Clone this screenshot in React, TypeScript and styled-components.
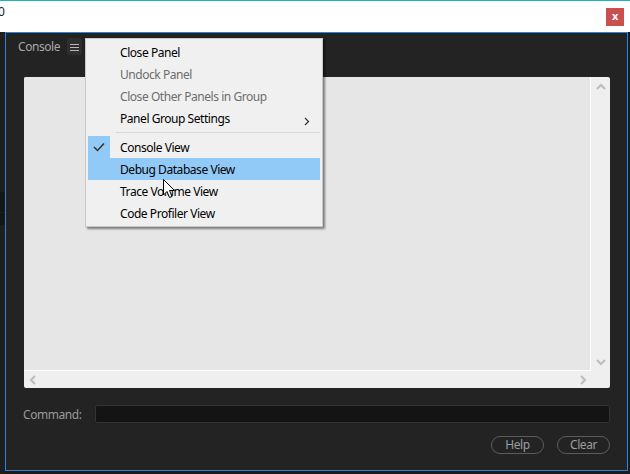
import styled, { createGlobalStyle } from "styled-components";

const GlobalStyle = createGlobalStyle`
  html, body {
    margin: 0;
    padding: 0;
    background: #1c1c1c;
    overflow: hidden;
  }
  * {
    box-sizing: border-box;
  }
`;

const Screen = styled.div`
  position: relative;
  width: 630px;
  height: 474px;
  display: flex;
  flex-direction: column;
  font-family: "Noto Sans", "Open Sans", sans-serif;
  font-size: 12px;
  letter-spacing: -0.45px;
  background: #1b1b1b;
`;

const TitleBar = styled.div`
  height: 32px;
  background: #fff;
  border-top: 1px solid #1ab4c0;
  display: flex;
  align-items: flex-start;
  justify-content: space-between;
  padding: 7px 6px 0 0;
`;

const Stray = styled.span`
  margin-top: -5px;
  margin-left: -2px;
  font-size: 12px;
  color: #222;
`;

const CloseButton = styled.div`
  width: 18px;
  height: 18px;
  background: #c9504f;
  color: #fff;
  font-weight: bold;
  font-size: 11px;
  line-height: 16px;
  text-align: center;
`;

const Workspace = styled.div`
  flex: 1;
  display: flex;
`;

const SideStrip = styled.div`
  width: 5px;
  background: #1e1e1e;
  display: flex;
  flex-direction: column;
  padding-top: 160px;
  gap: 1px;
`;

const SideBlock = styled.div<{ $h: number }>`
  height: ${(p) => p.$h}px;
  background: #151515;
`;

const Panel = styled.div`
  width: 623px;
  height: 439px;
  border: 1px solid #2a84e0;
  background: #232323;
  display: flex;
  flex-direction: column;
`;

const PanelHeader = styled.div`
  height: 44px;
  display: flex;
  align-items: flex-start;
  padding: 5px 0 0 12px;
`;

const TabLabel = styled.span`
  width: 49px;
  color: #a9a9a9;
  line-height: 17px;
`;

const MenuButton = styled.div`
  width: 15px;
  height: 17px;
  background: #2e2e2e;
  border-radius: 2px;
  display: flex;
  align-items: center;
  justify-content: center;
`;

const Output = styled.div`
  margin: 0 17px 0 18px;
  height: 311px;
  background: #efefef;
  border-radius: 2px;
  display: grid;
  grid-template-columns: 1fr 19px;
  grid-template-rows: 1fr 17px;
`;

const OutputText = styled.div`
  background: #e6e6e6;
  border-right: 1px solid #fff;
  border-bottom: 1px solid #fff;
  border-top-left-radius: 2px;
`;

const VScroll = styled.div`
  grid-row: 1 / 3;
  grid-column: 2;
  display: flex;
  flex-direction: column;
  justify-content: space-between;
  align-items: center;
  padding: 6px 0 22px;
`;

const HScroll = styled.div`
  display: flex;
  justify-content: space-between;
  align-items: center;
  padding: 0 4px 0 5px;
`;

const CommandRow = styled.div`
  margin: 17px 17px 0 17px;
  display: flex;
  align-items: center;
`;

const CommandLabel = styled.span`
  color: #9a9a9a;
  width: 72px;
`;

const CommandInput = styled.div`
  flex: 1;
  height: 18px;
  background: #141414;
  border: 1px solid #333;
  border-radius: 2px;
`;

const ButtonRow = styled.div`
  margin: 13px 17px 0 0;
  display: flex;
  justify-content: flex-end;
  gap: 13px;
`;

const PillButton = styled.div`
  width: 53px;
  height: 18px;
  border: 1px solid #5c5c5c;
  border-radius: 9px;
  color: #9d9d9d;
  line-height: 15px;
  text-align: center;
`;

const Menu = styled.div`
  position: absolute;
  left: 85px;
  top: 38px;
  width: 238px;
  height: 189px;
  background: #f0f0f0;
  border: 1px solid #c8c8c8;
  box-shadow: 2px 2px 2px rgba(0, 0, 0, 0.45);
  padding: 2px 2px;
  display: flex;
  flex-direction: column;
`;

const Item = styled.div<{ $disabled?: boolean; $hover?: boolean }>`
  position: relative;
  height: 22px;
  display: flex;
  align-items: center;
  padding-left: 32px;
  color: ${(p) => (p.$disabled ? "#6d6d6d" : "#000")};
  background: ${(p) => (p.$hover ? "#91c9f7" : "transparent")};
  white-space: nowrap;
`;

const CheckBox = styled.div`
  position: absolute;
  left: 0;
  top: 0;
  width: 22px;
  height: 22px;
  background: #91c9f7;
  display: flex;
  align-items: center;
  justify-content: center;
`;

const SubArrow = styled.div`
  position: absolute;
  right: 10px;
  top: 6px;
`;

const Separator = styled.div`
  height: 7px;
  display: flex;
  align-items: center;
  padding-left: 28px;
  &::after {
    content: "";
    flex: 1;
    height: 1px;
    background: #d7d7d7;
  }
`;

const Pointer = styled.svg`
  position: absolute;
  left: 163px;
  top: 179px;
`;

const Chevron = ({ dir }: { dir: "up" | "down" | "left" | "right" }) => {
  const d = {
    up: "M1 6 L5 2 L9 6",
    down: "M1 2 L5 6 L9 2",
    left: "M6 1 L2 5 L6 9",
    right: "M2 1 L6 5 L2 9",
  }[dir];
  const horiz = dir === "left" || dir === "right";
  return (
    <svg width={horiz ? 8 : 10} height={horiz ? 10 : 8} viewBox={horiz ? "0 0 8 10" : "0 0 10 8"}>
      <path d={d} fill="none" stroke="#bdbdbd" strokeWidth="2.2" />
    </svg>
  );
};

const App = () => {
  return (
    <Screen>
      <GlobalStyle />
      <TitleBar>
        <Stray>0</Stray>
        <CloseButton>x</CloseButton>
      </TitleBar>
      <Workspace>
        <SideStrip>
          <SideBlock $h={20} />
          <SideBlock $h={12} />
        </SideStrip>
        <Panel>
          <PanelHeader>
            <TabLabel>Console</TabLabel>
            <MenuButton>
              <svg width="9" height="8" viewBox="0 0 9 8">
                <path d="M0 1.5 H9 M0 4.5 H9 M0 7.5 H9" stroke="#b8b8b8" strokeWidth="1" />
              </svg>
            </MenuButton>
          </PanelHeader>
          <Output>
            <OutputText />
            <VScroll>
              <Chevron dir="up" />
              <Chevron dir="down" />
            </VScroll>
            <HScroll>
              <Chevron dir="left" />
              <Chevron dir="right" />
            </HScroll>
          </Output>
          <CommandRow>
            <CommandLabel>Command:</CommandLabel>
            <CommandInput />
          </CommandRow>
          <ButtonRow>
            <PillButton>Help</PillButton>
            <PillButton>Clear</PillButton>
          </ButtonRow>
        </Panel>
      </Workspace>

      <Menu>
        <Item>Close Panel</Item>
        <Item $disabled>Undock Panel</Item>
        <Item $disabled>Close Other Panels in Group</Item>
        <Item>
          Panel Group Settings
          <SubArrow>
            <svg width="6" height="9" viewBox="0 0 6 9">
              <path d="M1 1 L4.5 4.5 L1 8" fill="none" stroke="#333" strokeWidth="1.2" />
            </svg>
          </SubArrow>
        </Item>
        <Separator />
        <Item>
          <CheckBox>
            <svg width="12" height="10" viewBox="0 0 12 10">
              <path d="M1 5 L4.5 8.5 L11 1.5" fill="none" stroke="#333" strokeWidth="1.5" />
            </svg>
          </CheckBox>
          Console View
        </Item>
        <Item $hover>Debug Database View</Item>
        <Item>Trace Volume View</Item>
        <Item>Code Profiler View</Item>
      </Menu>

      <Pointer width="13" height="20" viewBox="0 0 13 20">
        <path
          d="M0.5 0.5 L0.5 16 L4 12.5 L6.5 18.5 L9 17.5 L6.5 11.5 L11.5 11.5 Z"
          fill="#fff"
          stroke="#000"
          strokeWidth="1"
        />
      </Pointer>
    </Screen>
  );
};

export default App;
